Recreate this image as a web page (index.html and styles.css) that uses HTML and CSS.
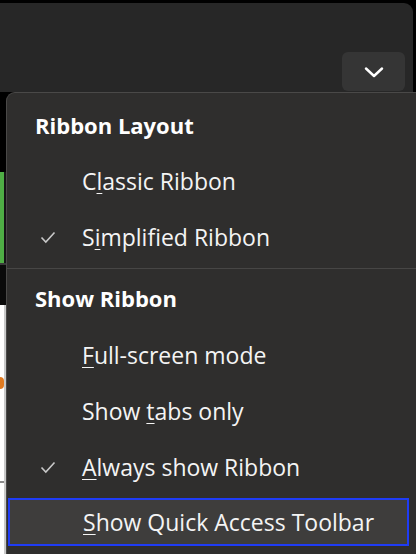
FILE: index.html
```html
<!DOCTYPE html>
<html>
<head>
<meta charset="utf-8">
<link rel="stylesheet" href="styles.css">
</head>
<body>
<div class="screen">
  <div class="topbar">
    <div class="expand-btn">
      <svg width="20" height="11" viewBox="0 0 20 11"><polyline points="2,1.5 10,9 18,1.5" fill="none" stroke="#ffffff" stroke-width="2.4" stroke-linecap="round" stroke-linejoin="round"/></svg>
    </div>
  </div>
  <div class="lower">
    <div class="strip">
      <div class="seg seg-black1"></div>
      <div class="seg seg-green"><div class="green"></div></div>
      <div class="seg seg-line"></div>
      <div class="seg seg-black2"></div>
      <div class="seg seg-white">
        <div class="mark"></div>
        <div class="hline"></div>
      </div>
    </div>
    <div class="menu">
      <div class="row header header-first">Ribbon Layout</div>
      <div class="row item"><span class="check"></span><span class="label">C<u>l</u>assic Ribbon</span></div>
      <div class="row item"><span class="check"><svg width="16" height="13" viewBox="0 0 16 13"><polyline points="1.5,6.5 5.8,11 14.5,1.5" fill="none" stroke="#c8c8c8" stroke-width="1.6"/></svg></span><span class="label">S<u>i</u>mplified Ribbon</span></div>
      <div class="sep"></div>
      <div class="row header header-second">Show Ribbon</div>
      <div class="row item"><span class="check"></span><span class="label"><u>F</u>ull-screen mode</span></div>
      <div class="row item"><span class="check"></span><span class="label">Show <u>t</u>abs only</span></div>
      <div class="row item"><span class="check"><svg width="16" height="13" viewBox="0 0 16 13"><polyline points="1.5,6.5 5.8,11 14.5,1.5" fill="none" stroke="#c8c8c8" stroke-width="1.6"/></svg></span><span class="label"><u>A</u>lways show Ribbon</span></div>
      <div class="row item focused"><span class="check"></span><span class="label"><u>S</u>how Quick Access Toolbar</span></div>
    </div>
  </div>
</div>
</body>
</html>
```

FILE: styles.css
```css
html, body {
  margin: 0;
  padding: 0;
  background: #000000;
}

.screen {
  width: 416px;
  height: 554px;
  overflow: hidden;
  display: flex;
  flex-direction: column;
  background: #000000;
  font-family: "Open Sans", "Noto Sans", sans-serif;
}

.topbar {
  margin-top: 3px;
  width: 413px;
  height: 89px;
  background: #272727;
  border-top-right-radius: 9px;
  display: flex;
  justify-content: flex-end;
  align-items: flex-end;
  flex-shrink: 0;
}

.expand-btn {
  width: 63px;
  height: 39px;
  margin: 0 8px 1px 0;
  background: #353535;
  border-radius: 6px;
  display: flex;
  align-items: center;
  justify-content: center;
}

.expand-btn svg {
  display: block;
  margin-top: 1px;
}

.lower {
  flex: 1;
  display: flex;
  min-height: 0;
}

.strip {
  width: 6px;
  flex-shrink: 0;
  display: flex;
  flex-direction: column;
}

.seg-black1 { height: 80px; background: #000; }
.seg-green { height: 91px; background: #151515; }
.green { width: 4px; height: 100%; background: #4fae45; }
.seg-line { height: 2px; background: #3a3a3a; }
.seg-black2 { height: 40px; background: #0a0a0a; }
.seg-white {
  flex: 1;
  background: #ffffff;
  border-right: 2px solid #c9c9c9;
  display: flex;
  flex-direction: column;
}
.mark {
  margin-top: 72px;
  width: 4px;
  height: 12px;
  background: #e07a20;
  border-radius: 0 4px 4px 0;
}
.hline {
  margin-top: 92px;
  width: 4px;
  height: 2px;
  background: #8a8a8a;
}

.menu {
  flex: 1;
  background: #2f2e2d;
  border-top: 1px solid #4a4948;
  border-left: 1px solid #4a4948;
  border-top-left-radius: 9px;
  padding-top: 3px;
  display: flex;
  flex-direction: column;
  color: #f4f4f4;
}

.row {
  height: 56px;
  display: flex;
  align-items: center;
  flex-shrink: 0;
  font-size: 23px;
  white-space: nowrap;
}

.header {
  font-size: 22px;
  font-weight: 700;
  color: #ffffff;
  padding-left: 28px;
}

.header-first { height: 57px; }

.header-second { height: 58px; }

.check {
  width: 16px;
  margin-left: 33px;
  margin-right: 26px;
  display: flex;
  align-items: center;
}

.check svg { display: block; }

.label u {
  text-decoration-thickness: 1px;
  text-underline-offset: 3px;
}

.sep {
  margin-top: 3px;
  height: 1px;
  background: #474645;
  flex-shrink: 0;
}

.focused {
  height: 48px;
  margin: 3px 7px 0 1px;
  border: 2px solid #1f3cf5;
  background: #3e3d3c;
  box-sizing: border-box;
}

.focused .check {
  margin-left: 31px;
}
```
